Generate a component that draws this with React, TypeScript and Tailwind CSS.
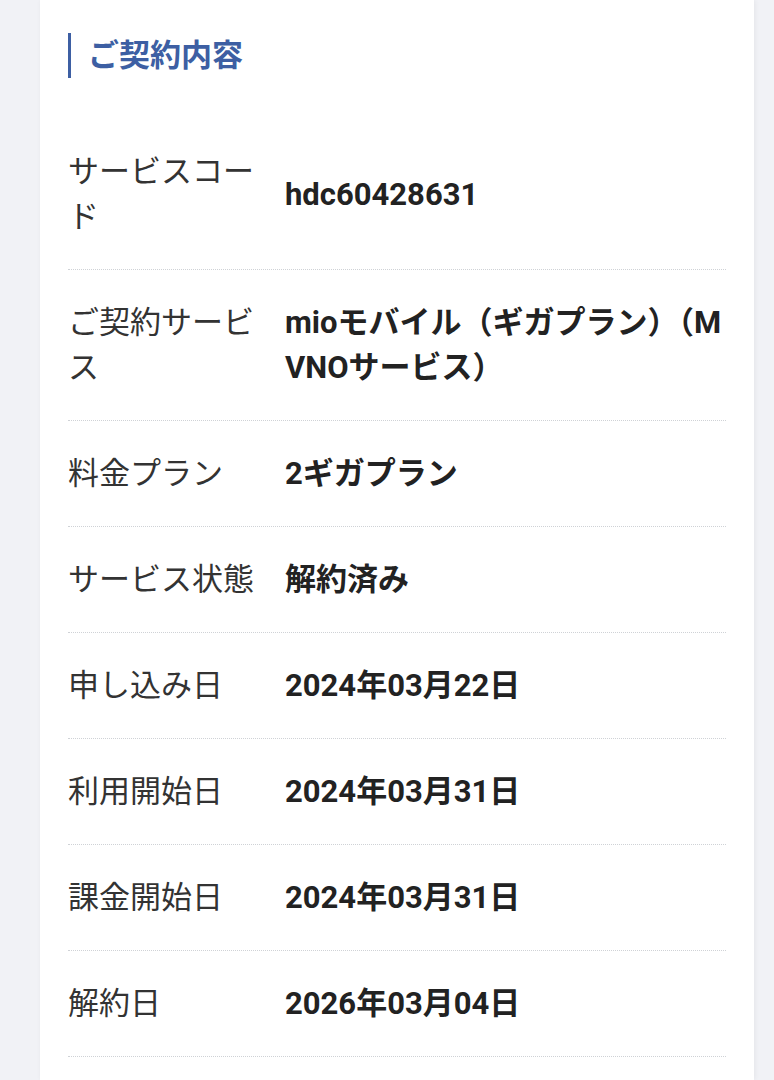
const rows: { label: string; value: string }[] = [
  { label: 'サービスコード', value: 'hdc60428631' },
  { label: 'ご契約サービス', value: 'mioモバイル（ギガプラン）（MVNOサービス）' },
  { label: '料金プラン', value: '2ギガプラン' },
  { label: 'サービス状態', value: '解約済み' },
  { label: '申し込み日', value: '2024年03月22日' },
  { label: '利用開始日', value: '2024年03月31日' },
  { label: '課金開始日', value: '2024年03月31日' },
  { label: '解約日', value: '2026年03月04日' },
];

export default function App() {
  return (
    <div className="min-h-[1080px] bg-[#f1f2f6] pl-[40px] pr-[20px] font-['Roboto','Noto_Sans_CJK_JP',sans-serif] text-[31px] leading-[45px]">
      <div className="min-h-[1080px] bg-white px-[28px] pt-[33px] shadow-[1px_0_5px_rgba(0,0,0,0.06)]">
        <h2 className="mb-[41px] border-l-[3px] border-[#3d5fa3] pl-[17px] font-bold text-[#3d5fa3]">
          ご契約内容
        </h2>
        <dl>
          {rows.map((row) => (
            <div
              key={row.label}
              className="grid grid-cols-[217px_1fr] items-center border-b border-dotted border-[#cfd2d6] py-[30px]"
            >
              <dt className="break-all pr-[28px] text-[#333]">{row.label}</dt>
              <dd className="break-all font-bold text-[#222]">{row.value}</dd>
            </div>
          ))}
        </dl>
      </div>
    </div>
  );
}
